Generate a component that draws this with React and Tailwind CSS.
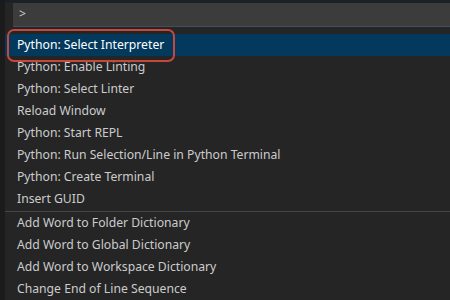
const groups = [
  [
    'Python: Select Interpreter',
    'Python: Enable Linting',
    'Python: Select Linter',
    'Reload Window',
    'Python: Start REPL',
    'Python: Run Selection/Line in Python Terminal',
    'Python: Create Terminal',
    'Insert GUID',
  ],
  [
    'Add Word to Folder Dictionary',
    'Add Word to Global Dictionary',
    'Add Word to Workspace Dictionary',
    'Change End of Line Sequence',
  ],
]

function CommandRow({ label, active }) {
  return (
    <div
      className={
        active
          ? 'relative flex h-[22px] items-center bg-[#04395e] pl-[12px] text-white'
          : 'flex h-[22px] items-center pl-[12px] text-[#cccccc]'
      }
    >
      {active ? (
        <span className="absolute left-[2px] top-[-5px] h-[33px] w-[168px] rounded-[7px] border-2 border-[#c8473c]" />
      ) : null}
      <span className="whitespace-nowrap">{label}</span>
    </div>
  )
}

export default function App() {
  return (
    <div
      className="flex h-[300px] w-[450px] overflow-hidden bg-[#1b1b1c] text-[12.2px]"
      style={{ fontFamily: '"Segoe UI", "Noto Sans", sans-serif' }}
    >
      <div className="w-[5px] shrink-0 bg-[#1b1b1c]" />
      <div className="flex flex-1 flex-col bg-[#252526]">
        <div className="h-[3px] bg-[#1c2127]" />
        <div className="flex pl-[8px]">
          <div className="flex h-[24px] flex-1 items-center border-b border-[#3e5163] bg-[#3c3c3c] pl-[6px] text-[#cccccc]">
            &gt;
          </div>
        </div>
        <div className="h-[7px]" />
        <div>
          {groups[0].map((label, i) => (
            <CommandRow key={label} label={label} active={i === 0} />
          ))}
        </div>
        <div className="mt-[1px] border-t border-[#454545]">
          {groups[1].map((label) => (
            <CommandRow key={label} label={label} />
          ))}
        </div>
      </div>
    </div>
  )
}
